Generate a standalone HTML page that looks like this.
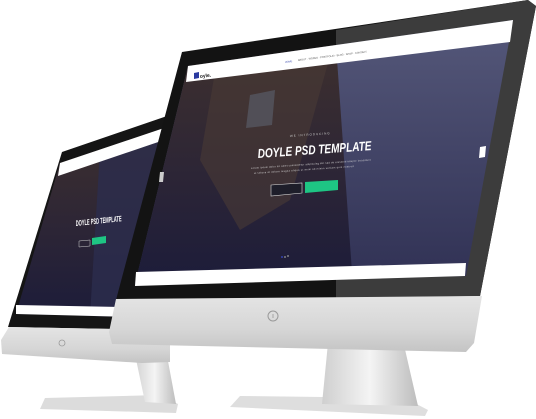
<!DOCTYPE html>
<html><head><meta charset="utf-8"><style>
html,body{margin:0;padding:0;background:#fff;width:536px;height:419px;overflow:hidden}
svg{display:block}
text{font-family:"Liberation Sans",sans-serif}
</style></head><body>
<svg width="536" height="419" viewBox="0 0 536 419" xmlns="http://www.w3.org/2000/svg">
<defs>
<linearGradient id="silver" x1="0" y1="0" x2="0" y2="1">
<stop offset="0" stop-color="#e4e4e4"/><stop offset="0.6" stop-color="#d6d6d6"/><stop offset="1" stop-color="#c4c4c4"/></linearGradient>
<linearGradient id="stand" x1="0" y1="0" x2="1" y2="0">
<stop offset="0" stop-color="#cfcfcf"/><stop offset="0.5" stop-color="#f4f4f4"/><stop offset="1" stop-color="#bdbdbd"/></linearGradient>
<linearGradient id="scrR" x1="0" y1="0" x2="0" y2="1">
<stop offset="0" stop-color="#55587a"/><stop offset="1" stop-color="#303154"/></linearGradient>
<linearGradient id="scrL" x1="0" y1="0" x2="0" y2="1">
<stop offset="0" stop-color="#3e302e"/><stop offset="0.55" stop-color="#2c2536"/><stop offset="1" stop-color="#1c1c3a"/></linearGradient>
</defs>

<polygon points="40,409 176,413 178,404 160,395 45,398" fill="#dcdcdc"/>
<polygon points="133,345 165,345 176,404 145,402" fill="url(#stand)"/>
<polygon points="62,152 170,115 170,330 8,327" fill="#151515"/>
<polygon points="9,327 170,330 170,362 142,363 2,354 1,340" fill="url(#silver)"/>
<polygon points="60,163 170,126 170,318 16,314" fill="url(#scrL)"/>
<polygon points="100,150 170,128 170,318 90,316" fill="#2c2d4e" opacity="0.8"/>
<polygon points="16,305 170,308 170,318 16,314" fill="#fff"/>
<polygon points="60,163 170,126 170,138 58,176" fill="#fff"/>
<text x="76" y="226" transform="rotate(-6 76 226)" font-size="8" font-style="italic" font-weight="bold" fill="#fff" textLength="46" lengthAdjust="spacingAndGlyphs">DOYLE PSD TEMPLATE</text>
<polygon points="79,241 90,240 90,246 79,247" fill="none" stroke="#ccc" stroke-width="0.5"/>
<polygon points="92,238 106,236 106,243 92,245" fill="#1ec584"/>
<circle cx="62" cy="343" r="3" fill="none" stroke="#999" stroke-width="0.8"/>

<polygon points="230,407 425,416 428,410 405,398 240,396" fill="#dedede"/>
<polygon points="328,343 404,345 418,406 322,404" fill="url(#stand)"/>
<polygon points="182,52 528,0 536,6 480,296 116,300" fill="#131313"/>
<polygon points="336,30 528,0 536,6 480,296 336,298" fill="#3c3c3c"/>
<polygon points="116,299 482,296 474,343 466,352 112,344 109,332" fill="url(#silver)"/>
<polygon points="188,66 513,20 466,276 135,284" fill="url(#scrR)"/>
<polygon points="188,66 336,45 352,272 135,284" fill="url(#scrL)"/>
<polygon points="215,72 330,56 290,200 240,230 200,160" fill="#4a3a36" opacity="0.6"/>
<polygon points="250,95 275,90 272,125 246,128" fill="#595b66" opacity="0.7"/>
<polygon points="188,66 513,20 510,42 186,82" fill="#fff"/>
<polygon points="194,73 199,72 199,78 194,79" fill="#2a3aa0"/>
<text x="200" y="78" transform="rotate(-7 200 78)" font-size="5" font-weight="bold" fill="#222">oyle.</text>
<g font-size="2.5" fill="#555">
<text x="285" y="63" transform="rotate(-7 285 63)" fill="#3344aa">HOME</text>
<text x="298" y="61" transform="rotate(-7 298 61)">ABOUT ·  WORKS ·  PORTFOLIO ·  BLOG ·  SHOP ·  CONTACT</text>
</g>
<polygon points="136,272 466,263 465,276 135,286" fill="#fff"/>
<text x="290" y="137" transform="rotate(-4 290 137)" font-size="3" fill="#ccc" letter-spacing="1">WE INTRODUCING</text>
<text x="258" y="158" transform="rotate(-4 258 158)" font-size="13" font-style="italic" font-weight="bold" fill="#fff" textLength="114" lengthAdjust="spacingAndGlyphs">DOYLE PSD TEMPLATE</text>
<text x="251" y="169" transform="rotate(-4 251 169)" font-size="2.4" fill="#ddd" textLength="120">Lorem ipsum dolor sit amet consectetur adipiscing elit sed do eiusmod tempor incididunt</text>
<text x="254" y="174" transform="rotate(-4 254 174)" font-size="2.4" fill="#ddd" textLength="100">ut labore et dolore magna aliqua ut enim ad minim veniam quis nostrud</text>
<polygon points="271,185 302,183 302,193 271,196" fill="#1e1e2a" stroke="#ddd" stroke-width="0.6"/>
<polygon points="305,182 338,180 338,190 305,193" fill="#1ec584"/>
<circle cx="282" cy="257" r="0.9" fill="#3a4dd0"/><circle cx="285" cy="257" r="0.9" fill="#999"/><circle cx="288" cy="256" r="0.9" fill="#999"/>
<polygon points="480,147 486,146 485,157 479,158" fill="#fff"/>
<polygon points="160,172 164,172 163,182 159,182" fill="#ccc"/>
<circle cx="273" cy="316" r="5" fill="none" stroke="#999" stroke-width="1"/>
<line x1="273" y1="314" x2="273" y2="318" stroke="#999" stroke-width="0.8"/>
</svg>
</body></html>
